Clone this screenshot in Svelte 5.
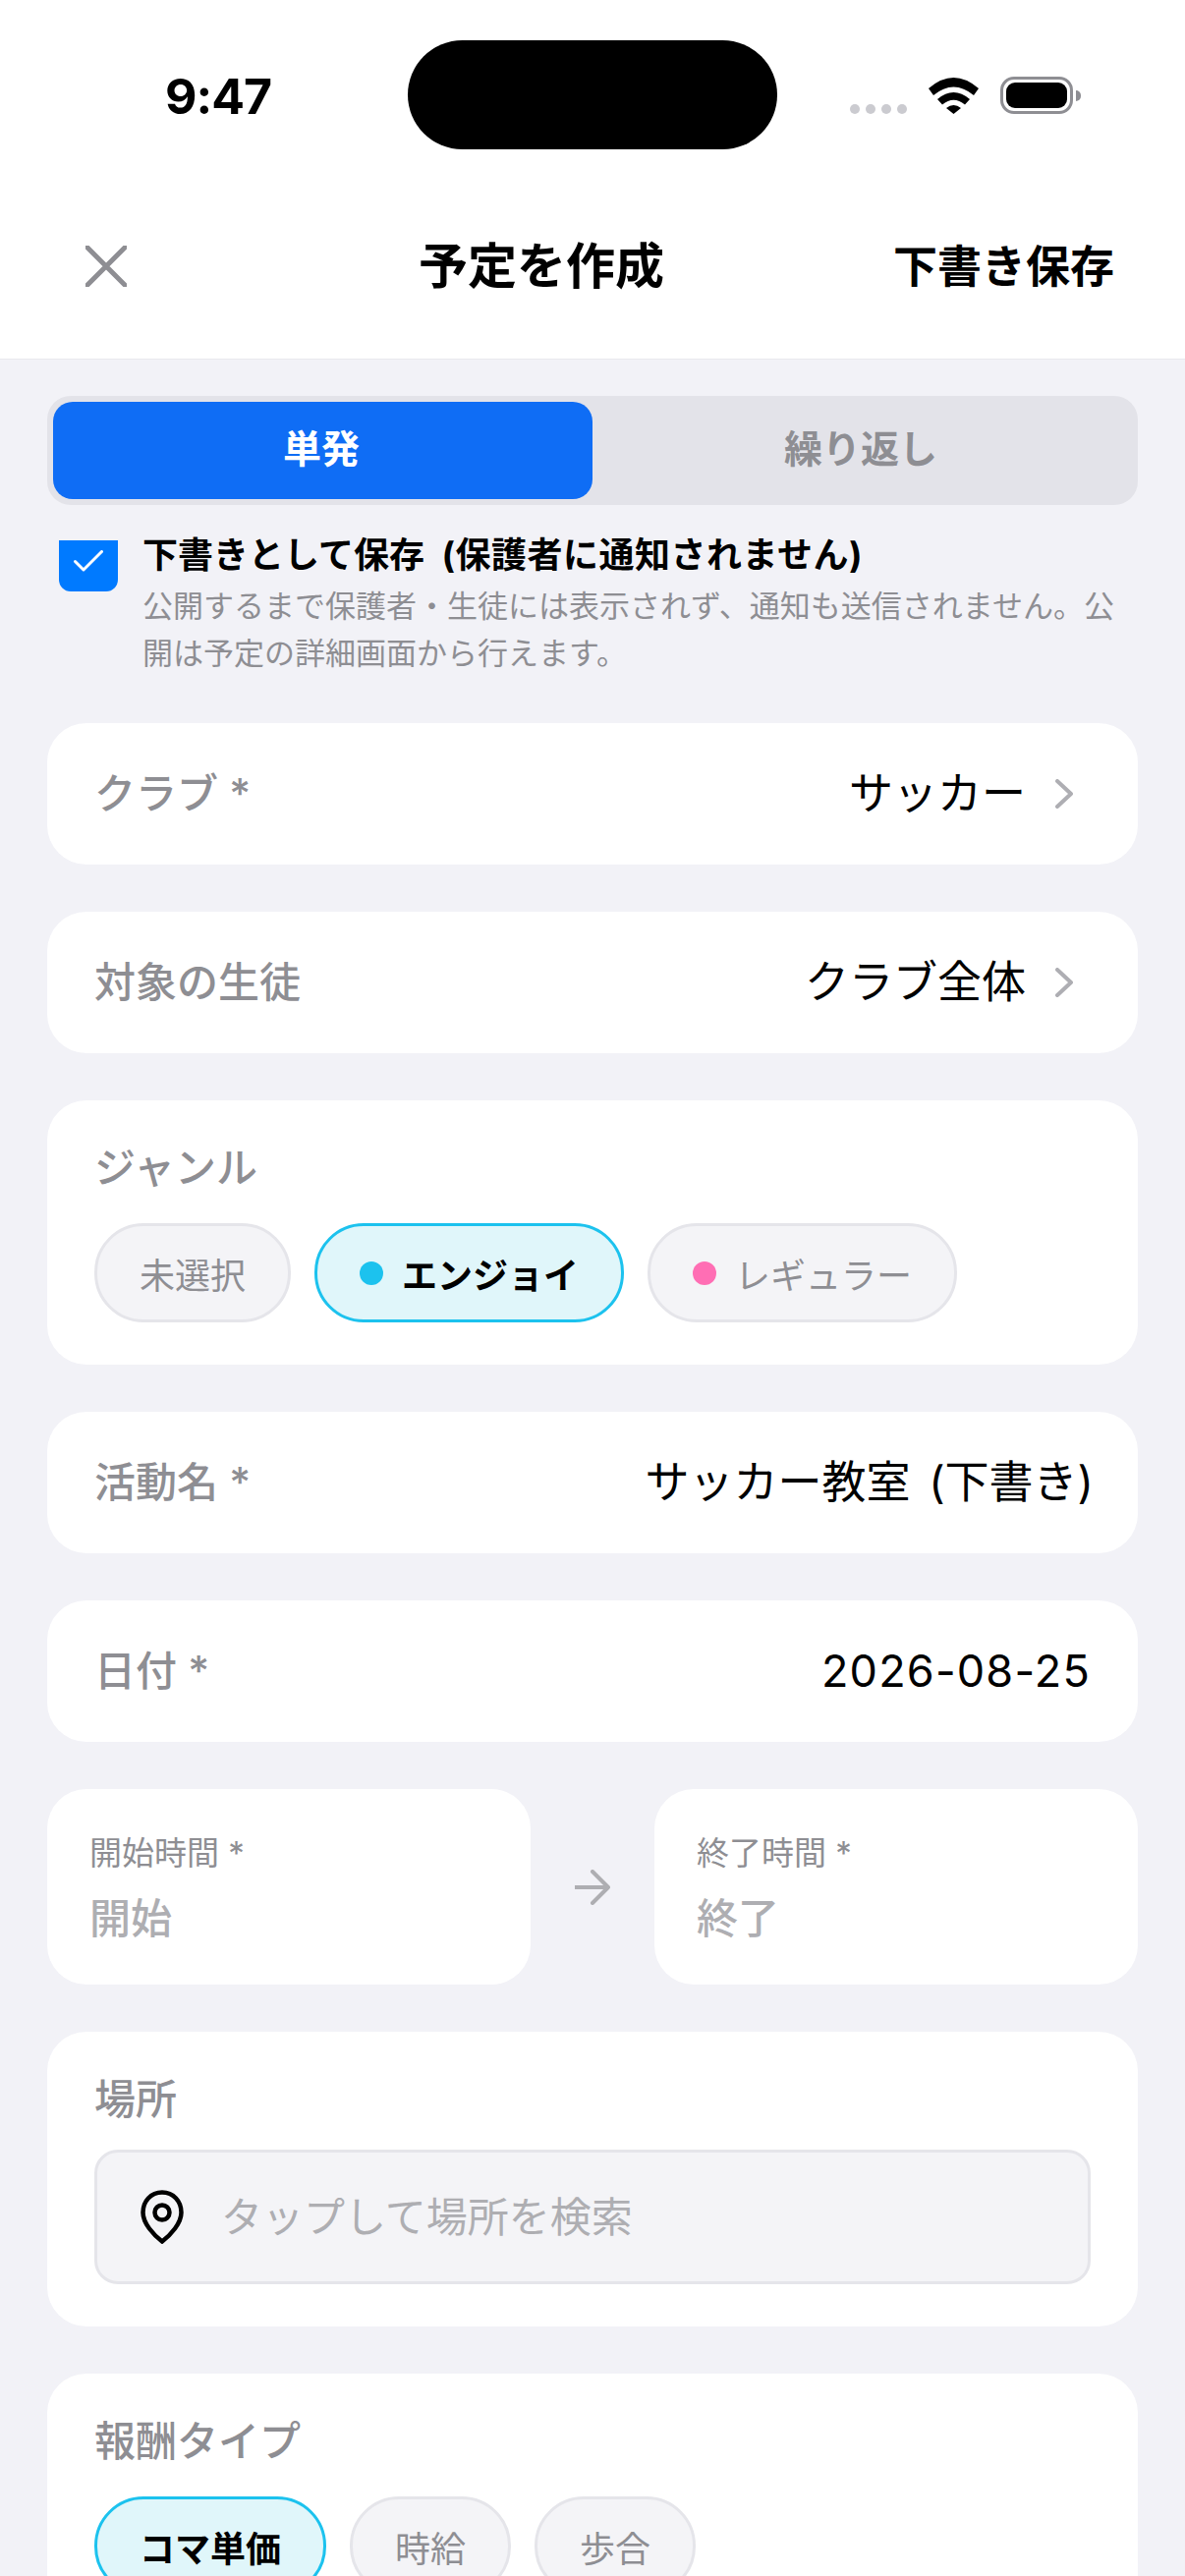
<script>
  let mode = $state('single');
  let isDraft = $state(true);
  let genre = $state('enjoy');
  let payType = $state('koma');

  const genres = [
    { id: 'none', label: '未選択' },
    { id: 'enjoy', label: 'エンジョイ', dot: '#1cc2ee' },
    { id: 'regular', label: 'レギュラー', dot: '#ff6eb4' }
  ];

  const payTypes = [
    { id: 'koma', label: 'コマ単価' },
    { id: 'hourly', label: '時給' },
    { id: 'share', label: '歩合' }
  ];
</script>

<div class="screen">
  <header class="top">
    <div class="status">
      <span class="time">9:47</span>
      <span class="island"></span>
      <div class="status-icons">
        <span class="dots"><i></i><i></i><i></i><i></i></span>
        <svg class="wifi" viewBox="0 0 51 37" width="51" height="37">
          <path d="M0 11Q25.500-11 51 11L46 18Q25.500 1 5 18Z" />
          <path d="M9 22Q25.500 8 42 22L37 27.500Q25.500 18 14 27.500Z" />
          <path d="M18 31Q25.500 25 33 31L25.500 37Z" />
        </svg>
        <span class="battery"><span class="level"></span></span>
        <span class="nub"></span>
      </div>
    </div>
    <nav class="nav">
      <button class="close" aria-label="閉じる">
        <svg viewBox="0 0 42 42" width="42" height="42">
          <path d="M1.500 1.500L40.500 40.500M40.500 1.500L1.500 40.500" />
        </svg>
      </button>
      <h1>予定を作成</h1>
      <button class="save">下書き保存</button>
    </nav>
  </header>

  <main class="form">
    <div class="segment">
      <button class:on={mode === 'single'} onclick={() => (mode = 'single')}>単発</button>
      <button class:on={mode === 'repeat'} onclick={() => (mode = 'repeat')}>繰り返し</button>
    </div>

    <div class="draft">
      <button class="check" aria-label="下書き" onclick={() => (isDraft = !isDraft)}>
        {#if isDraft}
          <svg viewBox="0 0 30 22" width="30" height="22">
            <path d="M1.500 11.500L10 20L28.500 1.500" />
          </svg>
        {/if}
      </button>
      <div class="draft-text">
        <strong>下書きとして保存 <span>(保護者に通知されません)</span></strong>
        <p>公開するまで保護者・生徒には表示されず、通知も送信されません。公開は予定の詳細画面から行えます。</p>
      </div>
    </div>

    <div class="cards">
      <div class="card row">
        <span class="label">クラブ *</span>
        <span class="value">サッカー
          <svg class="chevron" viewBox="0 0 18 30" width="18" height="30"><path d="M2 2L16 15L2 28" /></svg>
        </span>
      </div>

      <div class="card row">
        <span class="label">対象の生徒</span>
        <span class="value">クラブ全体
          <svg class="chevron" viewBox="0 0 18 30" width="18" height="30"><path d="M2 2L16 15L2 28" /></svg>
        </span>
      </div>

      <div class="card stack">
        <span class="label">ジャンル</span>
        <div class="chips">
          {#each genres as g}
            <button class="chip" class:active={genre === g.id} onclick={() => (genre = g.id)}>
              {#if g.dot}<span class="dot" style="background: {g.dot}"></span>{/if}
              {g.label}
            </button>
          {/each}
        </div>
      </div>

      <div class="card row">
        <span class="label">活動名 *</span>
        <span class="value title-value">サッカー教室 (下書き)</span>
      </div>

      <div class="card row">
        <span class="label">日付 *</span>
        <span class="value date">2026-08-25</span>
      </div>

      <div class="times">
        <div class="card time-card">
          <span class="small-label">開始時間 *</span>
          <span class="placeholder">開始</span>
        </div>
        <svg class="arrow" viewBox="0 0 36 36" width="36" height="36">
          <path d="M0 18H34M18 2L34 18L18 34" />
        </svg>
        <div class="card time-card">
          <span class="small-label">終了時間 *</span>
          <span class="placeholder">終了</span>
        </div>
      </div>

      <div class="card stack">
        <span class="label">場所</span>
        <div class="search">
          <svg class="pin" viewBox="0 0 44 55" width="44" height="55">
            <path d="M22 2.500C10.500 2.500 2.500 11.500 2.500 23C2.500 34 13 45.500 22 52.500C31 45.500 41.500 34 41.500 23C41.500 11.500 33.500 2.500 22 2.500Z" />
            <circle cx="22" cy="23" r="7.500" />
          </svg>
          <span class="placeholder">タップして場所を検索</span>
        </div>
      </div>

      <div class="card stack">
        <span class="label">報酬タイプ</span>
        <div class="chips">
          {#each payTypes as p}
            <button class="chip" class:active={payType === p.id} onclick={() => (payType = p.id)}>{p.label}</button>
          {/each}
        </div>
      </div>
    </div>
  </main>
</div>

<style>
  :global(body) {
    margin: 0;
    background: #f2f2f7;
  }

  .screen {
    width: 1206px;
    height: 2622px;
    overflow: hidden;
    background: #f2f2f7;
    color: #000;
    font-family: Inter, 'Noto Sans CJK JP', sans-serif;
  }

  button {
    border: 0;
    background: none;
    padding: 0;
    font: inherit;
    color: inherit;
  }

  .top {
    height: 366px;
    background: #fff;
    border-bottom: 1px solid #e9e9ee;
    box-sizing: border-box;
    padding-top: 41px;
  }

  .status {
    display: grid;
    grid-template-columns: 415px 376px 1fr;
    height: 111px;
    align-items: center;
  }

  .time {
    padding-left: 168px;
    font-size: 50px;
    font-weight: 700;
    letter-spacing: -1px;
    line-height: 1;
    margin-top: 2px;
  }

  .island {
    height: 111px;
    background: #000;
    border-radius: 56px;
  }

  .status-icons {
    display: flex;
    align-items: flex-start;
    padding-left: 74px;
    height: 111px;
  }

  .dots {
    display: flex;
    gap: 6px;
    margin-top: 65px;
  }

  .dots i {
    width: 10px;
    height: 10px;
    border-radius: 50%;
    background: #cbcbd0;
  }

  .wifi {
    margin: 38px 0 0 22px;
    fill: #000;
  }

  .battery {
    box-sizing: border-box;
    width: 74px;
    height: 38px;
    margin: 37px 0 0 22px;
    padding: 3px;
    border: 3px solid #8e8e93;
    border-radius: 14px;
    display: flex;
  }

  .level {
    flex: 1;
    background: #000;
    border-radius: 9px;
  }

  .nub {
    width: 5px;
    height: 11px;
    margin: 51px 0 0 3px;
    background: #8e8e93;
    border-radius: 0 5px 5px 0;
  }

  .nav {
    display: flex;
    align-items: center;
    justify-content: space-between;
    height: 110px;
    margin-top: 64px;
    padding: 0 72px 0 87px;
    position: relative;
  }

  .close {
    display: flex;
  }

  .close svg {
    fill: none;
    stroke: #8e8e93;
    stroke-width: 5;
    stroke-linecap: round;
  }

  .nav h1 {
    margin: 0;
    font-size: 50px;
    font-weight: 700;
    line-height: 1;
    position: absolute;
    left: 426px;
  }

  .save {
    font-size: 45px;
    font-weight: 700;
    line-height: 1;
  }

  .form {
    padding: 37px 48px 0;
  }

  .segment {
    box-sizing: border-box;
    height: 111px;
    padding: 6px;
    display: grid;
    grid-template-columns: 549px 1fr;
    background: #e3e3e9;
    border-radius: 24px;
  }

  .segment button {
    font-size: 39px;
    font-weight: 700;
    color: #8e8e93;
    border-radius: 20px;
    padding: 0 3px 10px 0;
  }

  .segment button.on {
    background: #0f6df5;
    color: #fff;
  }

  .draft {
    display: flex;
    gap: 25px;
    margin-top: 36px;
    padding-left: 12px;
  }

  .check {
    flex: none;
    width: 60px;
    height: 52px;
    display: flex;
    justify-content: center;
    padding-top: 10px;
    box-sizing: border-box;
    background: #007aff;
    border-radius: 0 0 12px 12px;
  }

  .check svg {
    fill: none;
    stroke: #fff;
    stroke-width: 3;
    stroke-linecap: round;
    stroke-linejoin: round;
  }

  .draft-text strong {
    display: block;
    font-size: 36px;
    font-weight: 700;
    line-height: 30px;
    word-spacing: 9px;
  }

  .draft-text strong span {
    letter-spacing: 0.5px;
  }

  .draft-text p {
    margin: 13px 0 0;
    font-size: 31px;
    line-height: 48px;
    color: #8e8e93;
  }

  .cards {
    display: flex;
    flex-direction: column;
    gap: 48px;
    margin-top: 47px;
  }

  .card {
    background: #fff;
    border-radius: 40px;
    box-sizing: border-box;
  }

  .row {
    height: 144px;
    padding: 0 48px;
    display: flex;
    align-items: center;
    justify-content: space-between;
  }

  .label {
    font-size: 42px;
    font-weight: 500;
    line-height: 56px;
    color: #8e8e93;
  }

  .value {
    display: flex;
    align-items: center;
    font-size: 45px;
    line-height: 56px;
  }

  .title-value {
    word-spacing: 6px;
    margin-right: -3px;
  }

  .date {
    letter-spacing: 1.2px;
  }

  .chevron {
    margin-left: 30px;
    margin-right: 18px;
    fill: none;
    stroke: #aeaeb3;
    stroke-width: 4;
    stroke-linecap: round;
    stroke-linejoin: round;
  }

  .stack {
    padding: 41px 48px 43px;
    display: flex;
    flex-direction: column;
    gap: 28px;
  }

  .chips {
    display: flex;
    gap: 24px;
  }

  .chip {
    display: flex;
    align-items: center;
    gap: 19px;
    height: 101px;
    padding: 0 43px;
    box-sizing: border-box;
    background: #f4f4f7;
    border: 3px solid #e5e5ea;
    border-radius: 50px;
    font-size: 36px;
    color: #8e8e93;
  }

  .chip.active {
    background: #e0f6fa;
    border-color: #1cc2ee;
    color: #000;
    font-weight: 700;
  }

  .dot {
    width: 24px;
    height: 24px;
    border-radius: 50%;
  }

  .times {
    display: grid;
    grid-template-columns: 492px 1fr 492px;
    align-items: center;
    justify-items: center;
  }

  .time-card {
    width: 100%;
    height: 199px;
    padding: 43px 43px 0;
    display: flex;
    flex-direction: column;
    gap: 17px;
  }

  .time-card .placeholder {
    font-weight: 500;
  }

  .small-label {
    font-size: 33px;
    line-height: 44px;
    color: #8e8e93;
  }

  .placeholder {
    font-size: 42px;
    line-height: 56px;
    color: #aeaeb2;
  }

  .arrow {
    fill: none;
    stroke: #aeaeb2;
    stroke-width: 4;
    stroke-linecap: round;
    stroke-linejoin: round;
  }

  .search {
    display: flex;
    align-items: center;
    gap: 38px;
    height: 137px;
    margin-top: -5px;
    padding: 0 44px;
    box-sizing: border-box;
    background: #f4f4f7;
    border: 3px solid #e5e5ea;
    border-radius: 24px;
  }

  .pin {
    fill: none;
    stroke: #000;
    stroke-width: 4.500;
  }
</style>
